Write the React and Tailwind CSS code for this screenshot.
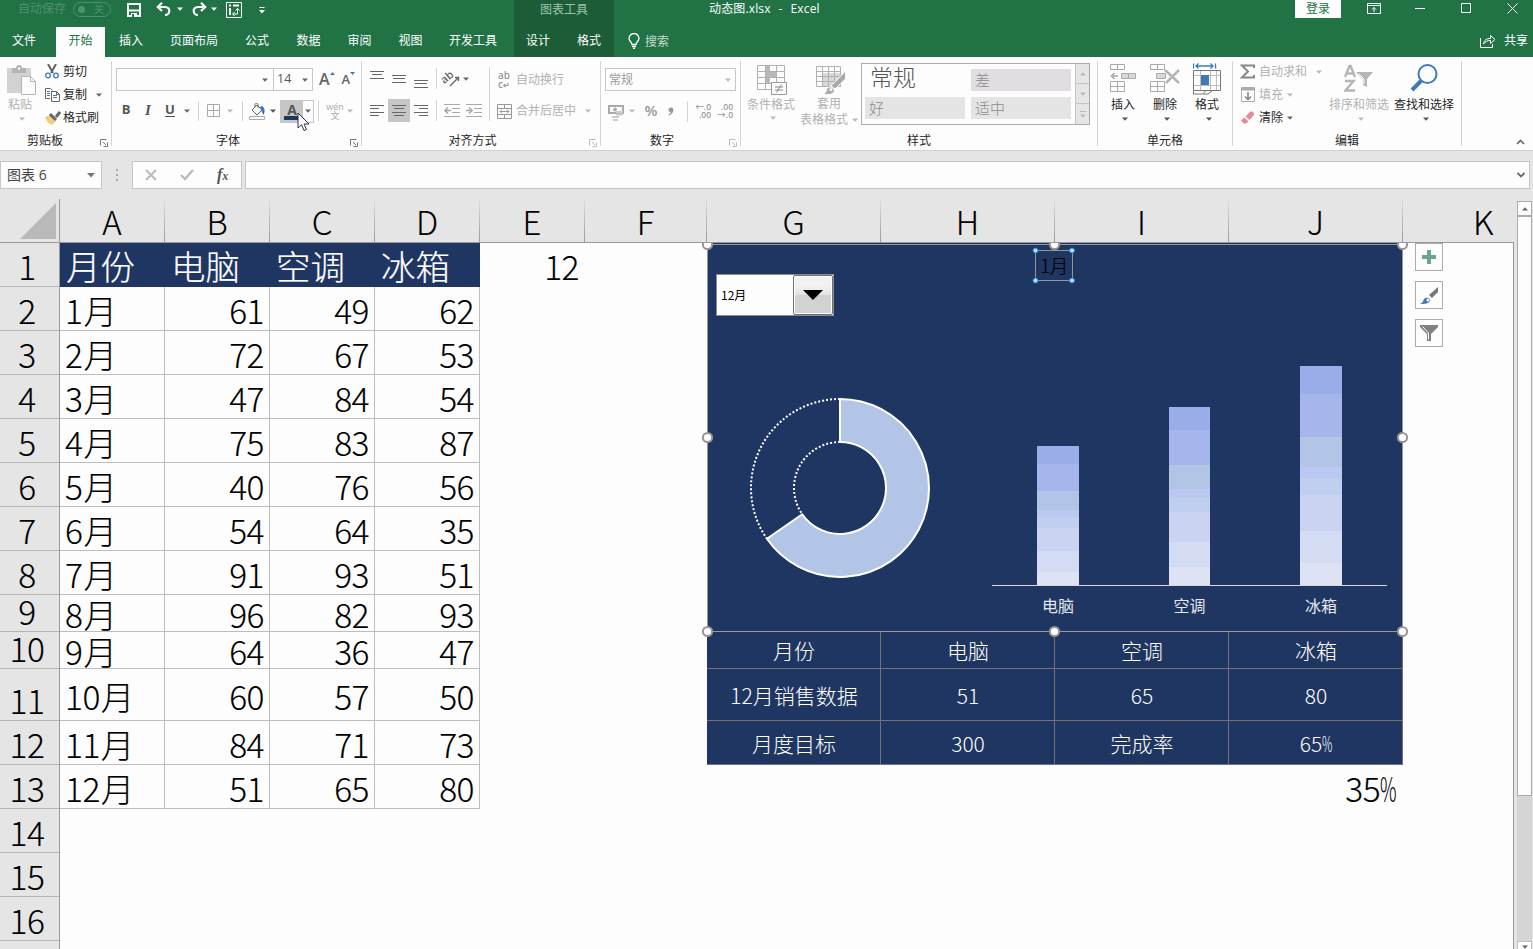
import React from 'react';

const columns = [
    {name: 'A', width: 105}, {name: 'B', width: 105}, {name: 'C', width: 105}, {name: 'D', width: 105},
    {name: 'E', width: 105}, {name: 'F', width: 122},
    {name: 'G', width: 174}, {name: 'H', width: 174}, {name: 'I', width: 174}, {name: 'J', width: 174},
];

const rowHeights = [44, 44, 44, 44, 44, 44, 44, 44, 37, 37, 52, 44, 44, 44, 44, 44];

const sales = [
    [61, 49, 62], [72, 67, 53], [47, 84, 54], [75, 83, 87], [40, 76, 56], [54, 64, 35],
    [91, 93, 51], [96, 82, 93], [64, 36, 47], [60, 57, 50], [84, 71, 73], [51, 65, 80],
];

const products = ['电脑', '空调', '冰箱'];

const summary = [
    {height: 37, cells: ['月份', ...products]},
    {height: 52, cells: ['12月销售数据', '51', '65', '80']},
    {height: 44, cells: ['月度目标', '300', '完成率', '65%']},
];

const barColors = ['#9aade9', '#a6b6ec', '#b3c5e7', '#bbc8f1', '#c0cef0', '#cad4f2', '#d4dcf4', '#dde3f4'];
const bars = [
    {x: 330, width: 42, stops: [446, 464, 491, 510, 517, 528, 551, 572, 585]},
    {x: 462, width: 41, stops: [407, 430, 465, 489, 498, 512, 542, 567, 585]},
    {x: 593, width: 42, stops: [366, 394, 437, 467, 478, 495, 531, 563, 585]},
];

function Caret({className = 'text-[#666]'}) {
    return (
        <svg className={`shrink-0 ${className}`} width="6" height="4" viewBox="0 0 6 4">
            <path d="M0 .5h6L3 3.7z" fill="currentColor"/>
        </svg>
    );
}

function Icon({w, h, className = '', children}) {
    return (
        <svg className={`shrink-0 ${className}`} width={w} height={h} viewBox={`0 0 ${w} ${h}`} fill="none"
             stroke="currentColor">
            {children}
        </svg>
    );
}

function Sep({className = ''}) {
    return <div className={`w-px shrink-0 bg-[#d5d5d5] ${className}`}/>;
}

function Group({label, className, labelClass = '', launcher, children}) {
    return (
        <div className={`flex h-[93px] shrink-0 ${className}`}>
            <div className="flex min-w-0 grow flex-col">
                <div className="flex h-[74px]">{children}</div>
                <div className="relative flex h-[19px] items-center justify-center">
                    <span className={labelClass}>{label}</span>
                    {launcher && (
                        <Icon w={8} h={8} className={`absolute right-[3px] top-2 ${launcher}`}>
                            <path d="M.5 6.5v-6h6M3 3l3 3M7.5 3.5v4h-4"/>
                        </Icon>
                    )}
                </div>
            </div>
            <Sep className="mt-1 h-[85px]"/>
        </div>
    );
}

function Lines({rows, className = ''}) {
    return (
        <Icon w={14} h={Math.round((rows.length - 1) * 10 / 3) + 1} className={className}>
            {rows.map(([from, to], i) => <path key={i} d={`M${from} ${Math.round(i * 10 / 3) + 0.5}H${to}`}/>)}
        </Icon>
    );
}

function TitleBar() {
    return (
        <div className="flex h-[27px] items-start text-white">
            <div className="flex h-[18px] w-[514px] items-center">
                <span className="ml-[18px] w-12 text-[#4f916c]">自动保存</span>
                <div className="ml-[7px] flex h-[15px] w-[38px] items-center justify-between rounded-full border border-[#4f916c] pl-1 pr-1.5 text-[10px] text-[#4f916c]">
                    <span className="size-[7px] rounded-full bg-[#4f916c]"/>关
                </div>
                <Icon w={14} h={14} className="ml-4 mt-0.5">
                    <path d="M1 1h12v12H1z" strokeWidth="2"/>
                    <path d="M1 7.5h12" strokeWidth="2"/>
                    <path d="M4 10h6v4H4z" fill="#fff" stroke="none"/>
                    <path d="M5 11h2v3H5z" fill="#217346" stroke="none"/>
                </Icon>
                <Icon w={15} h={14} className="ml-[15px]">
                    <path d="M1.500 5H9c6 0 5.500 8 0 8M6 .8 1.800 5 6 9" strokeWidth="2.200"/>
                </Icon>
                <Caret className="ml-1.5 text-white"/>
                <Icon w={15} h={14} className="ml-[9px]">
                    <path d="M13.500 5H6C0 5 .5 13 6 13M9 .8 13.200 5 9 9" strokeWidth="2.200"/>
                </Icon>
                <Caret className="ml-1 text-white"/>
                <Icon w={16} h={16} className="ml-[9px] mt-0.5">
                    <path d="M.5.5h15v15H.5z"/>
                    <path d="M3 2.500h2v2H3zM7 2.500h6v2H7zM3 6h2v7H3z" fill="currentColor" stroke="none"/>
                    <path d="M7 12h4.500V6.500M9.500 8.500l2-2 2 2M8.500 10l-2 2 2 2"/>
                </Icon>
                <Icon w={6} h={7} className="ml-[17px] mt-0.5">
                    <path d="M.5.5h5"/>
                    <path d="M0 3h6L3 6.500z" fill="currentColor" stroke="none"/>
                </Icon>
            </div>
            <div className="h-full w-[100px] bg-[#1c5d38] text-center leading-[19px] text-[#9dc3ad]">图表工具</div>
            <span className="ml-[95px] h-[18px] w-[586px] whitespace-pre leading-[18px] [word-spacing:0.7px] tracking-[0.15px]">动态图.xlsx  -  Excel</span>
            <div className="h-[18px] w-[46px] bg-[#fdfdfd] text-center leading-[18px] text-[#217346]">登录</div>
            <Icon w={14} h={11} className="ml-[26px] mt-[3px]">
                <path d="M.5.5h13v10H.5zM.5 2.500h13M7 9V4.500M5 6.500l2-2 2 2"/>
            </Icon>
            <Icon w={10} h={11} className="ml-[34px] mt-[3px]"><path d="M0 5.500h10"/></Icon>
            <Icon w={10} h={10} className="ml-9 mt-[3px]"><path d="M.5.5h9v9h-9z"/></Icon>
            <Icon w={11} h={11} className="ml-9 mt-[3px]"><path d="m.5.5 10 10M10.500.5l-10 10"/></Icon>
        </div>
    );
}

function Tabs() {
    const tab = 'shrink-0 text-center leading-[28px]';
    return (
        <div className="flex h-[30px] text-white">
            <div className={`${tab} mr-2 w-12`}>文件</div>
            <div className={`${tab} w-[49px] bg-[#fdfdfd] text-[#217346]`}>开始</div>
            <div className={`${tab} w-[52px]`}>插入</div>
            <div className={`${tab} w-[74px]`}>页面布局</div>
            <div className={`${tab} w-[52px]`}>公式</div>
            <div className={`${tab} w-[51px]`}>数据</div>
            <div className={`${tab} w-[51px]`}>审阅</div>
            <div className={`${tab} w-[51px]`}>视图</div>
            <div className={`${tab} mr-1 w-[74px]`}>开发工具</div>
            <div className="flex w-[100px] bg-[#1c5d38]">
                <div className={`${tab} w-12`}>设计</div>
                <div className={`${tab} w-[54px]`}>格式</div>
            </div>
            <Icon w={12} h={16} className="ml-[14px] mt-1.5">
                <path d="M4 11.500C4 9 1 8.500 1 5.500a5 5 0 0 1 10 0c0 3-3 3.500-3 6zM4 13.500h4M5 15.500h2" strokeWidth="1.300"/>
            </Icon>
            <div className={`${tab} ml-[5px] w-6 pt-px text-[#c5dccf]`}>搜索</div>
            <Icon w={16} h={14} className="ml-auto mt-[7px]">
                <path d="M.5 4v9.500h12V10M3.500 10c.5-4 3-5.500 7-5.500V1.500l4.500 4-4.500 4v-3c-3 0-5 .8-7 3.500z"/>
            </Icon>
            <div className={`${tab} ml-2 mr-[5px] w-6`}>共享</div>
        </div>
    );
}

function ClipboardGroup() {
    return (
        <Group label="剪贴板" className="w-[112px]" labelClass="mr-[21px]" launcher="text-[#777]">
            <div className="flex w-[43px] flex-col items-center text-[#b1b1b1]">
                <Icon w={29} h={31} className="mt-2">
                    <path d="M0 3h24v25H0z" fill="#d2d2d2" stroke="none"/>
                    <path d="M5 8V3h4c0-4 6-4 6 0h4v5z" fill="#b5b5b5" stroke="none"/>
                    <path d="M11 3.500h2" stroke="#fff" strokeWidth="2"/>
                    <path d="M14.500 11.500h9l5 5v13h-14zM23.500 11.500v5h5" fill="#fdfdfd" stroke="#b5b5b5"/>
                </Icon>
                <span className="mr-[3px] leading-[18px]">粘贴</span>
                <Caret className="mt-[3px] text-[#bbb]"/>
            </div>
            <div className="ml-[2px] flex flex-col pt-[3px] text-[#262626]">
                <div className="flex h-[23px] items-center">
                    <Icon w={14} h={15} className="mr-1">
                        <path d="M3 0l5 9M11 0 6 9" stroke="#666" strokeWidth="2"/>
                        <circle cx="3" cy="11.500" r="2.300" stroke="#3f7ab5" strokeWidth="1.300"/>
                        <circle cx="11" cy="11.500" r="2.300" stroke="#3f7ab5" strokeWidth="1.300"/>
                    </Icon>
                    剪切
                </div>
                <div className="flex h-[23px] items-center">
                    <Icon w={15} h={14} className="mr-[3px] text-[#666]">
                        <path d="M5 10.500H.5V.5h5l2 2"/>
                        <path d="M2 3.500h3M2 5.500h3M2 7.500h3M8 7.500h4M8 9.500h4" stroke="#3f7ab5"/>
                        <path d="M6.500 3.500h5l3 3v7h-8zM11.500 3.500v3h3"/>
                    </Icon>
                    复制
                    <Caret className="ml-[9px] text-[#666]"/>
                </div>
                <div className="flex h-[23px] items-center">
                    <Icon w={16} h={14} className="mr-0.5">
                        <path d="M0 6l5-2 6 6-4 4c-2-1-5-2-7-8z" fill="#f5cd82" stroke="none"/>
                        <path d="M5 3l6 6M11 6l4-5" stroke="#666" strokeWidth="3"/>
                    </Icon>
                    格式刷
                </div>
            </div>
        </Group>
    );
}

function FontGroup() {
    return (
        <Group label="字体" className="w-[250px]" labelClass="mr-[17px]" launcher="text-[#777]">
            <div className="flex flex-col">
                <div className="ml-1 mt-[11px] flex h-[23px]">
                    <div className="flex w-[158px] items-center justify-end border border-[#c6c6c6] pr-[5px]"><Caret/></div>
                    <div className="-ml-px flex w-10 items-center justify-between border border-[#c6c6c6] pl-[3px] pr-1 text-[12.5px] text-[#555]">
                        14<Caret/>
                    </div>
                    <span className="ml-1.5 pt-[3px] text-[16px] font-semibold text-[#666]">A</span>
                    <Icon w={5} h={3} className="mt-1"><path d="M0 3h5L2.500 0z" fill="#3f7ab5" stroke="none"/></Icon>
                    <span className="ml-[7px] pt-[5px] text-[13px] font-semibold text-[#666]">A</span>
                    <Icon w={5} h={3} className="mt-1"><path d="M0 0h5L2.500 3z" fill="#3f7ab5" stroke="none"/></Icon>
                </div>
                <div className="mt-2 flex h-6 items-center text-[#555]">
                    <span className="-mt-1 w-7 text-center text-[13px] font-bold">B</span>
                    <span className="-mt-0.5 w-4 text-center font-['Liberation_Serif'] text-[15px] font-bold italic">I</span>
                    <span className="-mt-1 w-7 text-center text-[13px] font-bold underline underline-offset-2">U</span>
                    <Caret/>
                    <Sep className="ml-2 h-5"/>
                    <Icon w={14} h={14} className="ml-2 text-[#aaa]"><path d="M.5.5h12v12H.5zM6.500.5v12M.5 6.500h12"/></Icon>
                    <Caret className="ml-1.5 text-[#bbb]"/>
                    <Sep className="ml-[9px] h-5"/>
                    <Icon w={17} h={17} className="ml-1.5">
                        <path d="M3 7l5-5 5 5-5 5zM6 4V1.500C6 0 9 0 9 1.500V5" stroke="#666"/>
                        <path d="M12 3c3 0 5 4 2.500 9C13 10 13 8 11 5z" fill="#3f7ab5" stroke="none"/>
                        <path d="M.5 13.500h15v3H.5z" stroke="#aaa"/>
                    </Icon>
                    <Caret className="ml-1"/>
                    <div className="relative ml-1 flex h-[23px] w-[34px] border border-[#c6c6c6]">
                        <div className="flex w-[22px] flex-col items-center bg-[#c6c6c6] pt-[3px]">
                            <span className="text-[14px] font-bold leading-[12px]">A</span>
                            <span className="h-1 w-4 bg-[#203662]"/>
                        </div>
                        <div className="flex grow items-center justify-center"><Caret/></div>
                        <svg className="absolute left-4 top-[11px] z-20" width="14" height="20" viewBox="0 0 14 20">
                            <path d="M1 1v15l3.500-3.300L7 18.500l2.500-1-2.500-5.500h5z" fill="#fff" stroke="#2a3550"/>
                        </svg>
                    </div>
                    <Sep className="ml-1 h-5"/>
                    <div className="ml-[7px] flex w-[18px] flex-col items-center text-[#aaa]">
                        <span className="text-[9px] leading-[9px]">wén</span>
                        <span className="text-[9px] leading-[9px]">文</span>
                    </div>
                    <Caret className="ml-[3px] text-[#bbb]"/>
                </div>
            </div>
        </Group>
    );
}

function AlignGroup() {
    const full = [[0, 14], [1, 13], [0, 14]];
    return (
        <Group label="对齐方式" className="w-[239px]" labelClass="mr-[17px]" launcher="text-[#bbb]">
            <div className="flex w-[127px] flex-col pl-2 text-[#666]">
                <div className="mt-[11px] flex h-6">
                    <Lines rows={[[0, 14], [2, 12], [0, 14]]} className="mt-[3px]"/>
                    <Lines rows={full} className="ml-2 mt-[7px]"/>
                    <Lines rows={full} className="ml-2 mt-3"/>
                    <Sep className="ml-2 h-[21px]"/>
                    <Icon w={17} h={16} className="ml-[7px] mt-[3px] overflow-visible">
                        <text x="-2" y="9" fontSize="11" fontWeight="600" fill="currentColor" stroke="none"
                              transform="rotate(-40 5 8)">ab
                        </text>
                        <path d="M6 15 14.500 6.500M11 6.500h3.500V10" strokeWidth="1.400"/>
                    </Icon>
                    <Caret className="ml-[2px] mt-[9px]"/>
                </div>
                <div className="mt-[7px] flex h-[23px] items-center">
                    <Lines rows={[[0, 14], [0, 9], [0, 14], [0, 9]]}/>
                    <div className="ml-1 flex h-[23px] w-[22px] items-center justify-center bg-[#c6c6c6]">
                        <Lines rows={[[0, 14], [2, 12], [0, 14], [2, 12]]}/>
                    </div>
                    <Lines rows={[[0, 14], [5, 14], [0, 14], [5, 14]]} className="ml-1"/>
                    <Sep className="ml-2 h-[21px]"/>
                    <Icon w={16} h={13} className="ml-[7px] text-[#aaa]">
                        <path d="M0 .5h16M8 4.500h8M8 8.500h8M0 12.500h16"/>
                        <path d="M1 6.500h6M4 3.500l-3 3 3 3" strokeWidth="1.600"/>
                    </Icon>
                    <Icon w={16} h={13} className="ml-1.5 text-[#aaa]">
                        <path d="M0 .5h16M8 4.500h8M8 8.500h8M0 12.500h16"/>
                        <path d="M0 6.500h6M3 3.500l3 3-3 3" strokeWidth="1.600"/>
                    </Icon>
                </div>
            </div>
            <Sep className="mt-[10px] h-[54px]"/>
            <div className="flex flex-col text-[#b1b1b1]">
                <div className="ml-2 mt-[11px] flex h-[23px] items-center">
                    <div className="mr-[5px] flex w-[13px] flex-col text-[10px] font-semibold leading-[9px] text-[#999]">
                        <span>ab</span>
                        <span>c<span className="text-[8px]">↵</span></span>
                    </div>
                    自动换行
                </div>
                <div className="ml-[7px] mt-2 flex h-6 items-center">
                    <Icon w={15} h={15} className="mr-1 text-[#999]">
                        <path d="M.5.5h14v14H.5zM.5 4.500h14M.5 10.500h14M7.500.5v4M7.500 10.500v4M3 7.500h9M5 5.500l-2 2 2 2M10 5.500l2 2-2 2"/>
                    </Icon>
                    合并后居中
                    <Caret className="ml-[9px] text-[#bbb]"/>
                </div>
            </div>
        </Group>
    );
}

function NumberGroup() {
    return (
        <Group label="数字" className="w-[140px]" labelClass="mr-[17px]" launcher="text-[#bbb]">
            <div className="flex flex-col text-[#999]">
                <div className="ml-1 mt-[11px] flex h-[23px] w-[131px] items-center justify-between border border-[#c6c6c6] pl-[3px] pr-1">
                    常规<Caret className="text-[#bbb]"/>
                </div>
                <div className="ml-[7px] mt-2 flex h-6 items-center">
                    <Icon w={16} h={16} className="mt-1 text-[#aaa]">
                        <path d="M1 1h14v7H1z" strokeWidth="2"/>
                        <circle cx="7" cy="4.500" r="1.500" fill="currentColor"/>
                        <path d="M8 7h7M8 9.500h7M4 12h7M5 15h5" stroke="#ccc" strokeWidth="2"/>
                    </Icon>
                    <Caret className="ml-[5px] text-[#bbb]"/>
                    <span className="-mt-0.5 ml-2 w-4 text-center text-[15px] font-semibold">%</span>
                    <svg className="ml-[9px]" width="6" height="9" viewBox="0 0 6 9">
                        <path d="M3 .5c4 0 3 6-2 8l-.5-1C2 7 2.500 6 2.500 5-.5 5 0 .5 3 .5z" fill="#999"/>
                    </svg>
                    <Sep className="ml-[13px] h-[21px]"/>
                    <div className="ml-2 flex w-[15px] flex-col items-end text-[8.5px] font-semibold leading-[8px]">
                        <span>←.0</span>
                        <span>.00</span>
                    </div>
                    <div className="ml-[7px] flex w-[15px] flex-col items-end text-[8.5px] font-semibold leading-[8px]">
                        <span>.00</span>
                        <span>→.0</span>
                    </div>
                </div>
            </div>
        </Group>
    );
}

function StylesGroup() {
    const style = 'flex h-[22px] w-[100px] items-center pl-1 text-[15px] font-light';
    return (
        <Group label="样式" className="w-[357px]">
            <div className="flex w-[60px] flex-col items-center text-[#b1b1b1]">
                <Icon w={30} h={30} className="ml-0.5 mt-2">
                    <path d="M9 1h4v5h4v6h-4v6H9z" fill="#b8b8b8" stroke="none"/>
                    <path d="M9 7h10v5H9z" fill="#b8b8b8" stroke="none"/>
                    <path d="M.5.5h27v24H.5zM.5 6.500h27M.5 12.500h27M.5 18.500h27M8.500.5v24M19.500.5v24"/>
                    <path d="M14.500 17.500h15v12h-15z" fill="#fdfdfd" stroke="#999"/>
                    <path d="M18 22h8M18 25h8M24.500 19.500l-5 8" stroke="#888"/>
                </Icon>
                <span className="leading-[19px]">条件格式</span>
                <Caret className="ml-1 mt-[2px] text-[#bbb]"/>
            </div>
            <div className="flex w-[60px] flex-col text-[#b1b1b1]">
                <Icon w={30} h={29} className="ml-[15px] mt-[9px]">
                    <path d="M7 7h18v14H7z" fill="#d8d8d8" stroke="none"/>
                    <path d="M.5.5h24v20H.5zM.5 5.500h24M.5 10.500h24M.5 15.500h24M6.500.5v20M12.500.5v20M18.500.5v20"/>
                    <path d="M29.500 5v8L19 23l-4-3z" fill="#aaa" stroke="#fdfdfd"/>
                    <path d="M6 28c4 0 4-3 5-6 3-3 9 1 7 4-2 3-7 3-12 2z" fill="#aaa" stroke="#fdfdfd"/>
                    <circle cx="15" cy="23.500" r="1.500" fill="#fdfdfd" stroke="none"/>
                </Icon>
                <span className="ml-4 leading-[18px]">套用</span>
                <span className="-ml-px flex items-center leading-[13px]">
                    表格格式<Caret className="ml-1 text-[#bbb]"/>
                </span>
            </div>
            <div className="mt-1.5 flex h-[62px] w-[229px] border border-[#ababab]">
                <div className="grid grow grid-cols-[100px_100px] content-start gap-1.5 pl-[3px] pt-[5px] text-[#8c8c8c]">
                    <div className="flex h-[22px] items-center whitespace-nowrap pl-[5px] text-[23px] font-light text-[#555]">
                        <span className="-mt-1.5">常规</span>
                    </div>
                    <div className={`${style} bg-[#e2dde2]`}>差</div>
                    <div className={`${style} bg-[#e4e4e4]`}>好</div>
                    <div className={`${style} bg-[#e4e4e4]`}>适中</div>
                </div>
                <div className="flex w-[14px] flex-col divide-y divide-[#c6c6c6] border-l border-[#c6c6c6] bg-[#e5e5e5]">
                    <div className="flex h-5 items-center justify-center"><Caret className="rotate-180 text-[#bbb]"/></div>
                    <div className="flex h-5 items-center justify-center"><Caret className="text-[#bbb]"/></div>
                    <div className="flex grow flex-col items-center justify-center gap-0.5">
                        <span className="h-px w-1.5 bg-[#bbb]"/><Caret className="text-[#bbb]"/>
                    </div>
                </div>
            </div>
        </Group>
    );
}

function BigButton({label, className, icon, muted}) {
    return (
        <div className={`flex shrink-0 flex-col items-center ${muted ? 'text-[#b1b1b1]' : 'text-[#262626]'} ${className}`}>
            <div className="flex h-[38px] items-end">{icon}</div>
            <span className="whitespace-nowrap leading-[19px]">{label}</span>
            <Caret className={muted ? 'ml-1 mt-[3px] text-[#bbb]' : 'ml-1 mt-[3px] text-[#555]'}/>
        </div>
    );
}

function CellsGroup() {
    return (
        <Group label="单元格" className="w-[135px]">
            <BigButton label="插入" className="w-[50px]" icon={
                <Icon w={26} h={31} className="text-[#aaa]">
                    <path d="M.5.5h14v5H.5zM7.500.5v5M.5 17.500h14v10H.5zM.5 22.500h14M7.500 17.500v10"/>
                    <path d="M11.500 9.500h14v5h-14zM18.500 9.500v5" fill="#d8d8d8"/>
                    <path d="M8 12H2M4.500 9l-3 3 3 3" strokeWidth="1.600"/>
                </Icon>
            }/>
            <BigButton label="删除" className="w-[34px]" icon={
                <Icon w={30} h={31} className="text-[#aaa]">
                    <path d="M.5.5h14v5H.5zM7.500.5v5M.5 17.500h14v10H.5zM.5 22.500h14M7.500 17.500v10"/>
                    <path d="M6.500 9.500h9v5h-9z" fill="#d8d8d8"/>
                    <path d="M15 6l14 13M29 6 16 19" strokeWidth="2.500" stroke="#b5b5b5"/>
                </Icon>
            }/>
            <BigButton label="格式" className="w-[50px]" icon={
                <Icon w={28} h={32} className="text-[#777]">
                    <path d="M.5.500v5M22.500.5v5M3 3h17M5.500.5 3 3l2.500 2.500M17.500.5 20 3l-2.500 2.500" stroke="#3f7ab5"
                          strokeWidth="1.300"/>
                    <path d="M.5 12.500h27M.5 22.500h27M7.500 7.500v20M17.500 7.500v20M23.500 7.500v20" stroke="#bbb"/>
                    <path d="M.5 7.500h27v20H.5z"/>
                    <path d="M8 12h8v10H8z" fill="#3f7ab5" stroke="none"/>
                    <path d="M.5 28v3h9l3-3M10 31h5l4-3"/>
                </Icon>
            }/>
        </Group>
    );
}

function EditGroup() {
    return (
        <Group label="编辑" className="w-[229px]">
            <div className="flex w-[96px] shrink-0 flex-col pl-[7px] pt-[3px] text-[#b1b1b1]">
                <div className="flex h-[23px] items-center">
                    <Icon w={15} h={15} className="mr-1 text-[#888]">
                        <path d="M14 4V1.500H2L8 7.500l-6 6h12V11" strokeWidth="2"/>
                    </Icon>
                    自动求和
                    <Caret className="ml-[9px] text-[#bbb]"/>
                </div>
                <div className="flex h-[23px] items-center">
                    <Icon w={14} h={15} className="ml-px mr-1 text-[#aaa]">
                        <path d="M.5.5h13v14H.5z"/>
                        <path d="M0 2h14" strokeWidth="3"/>
                        <path d="M7 5v7M4 9.500l3 3 3-3" strokeWidth="1.600" stroke="#888"/>
                    </Icon>
                    填充
                    <Caret className="ml-1 text-[#bbb]"/>
                </div>
                <div className="flex h-[23px] items-center text-[#262626]">
                    <Icon w={14} h={14} className="ml-px mr-1">
                        <path d="M4.500 5.500 9.500.5h2L13 2.500v1.500L8.500 9zM0 9.500l3.500-3 4 4L5 12.500H2.500z" fill="#e88a9a" stroke="none"/>
                    </Icon>
                    清除
                    <Caret className="ml-1 text-[#666]"/>
                </div>
            </div>
            <BigButton label="排序和筛选" className="w-[60px]" muted icon={
                <Icon w={30} h={31} className="text-[#b5b5b5]">
                    <path d="M1 13 5.500 2h1L11 13M2.500 9.500h7M1 17h8.500L1.500 26.500H11" strokeWidth="2.400"/>
                    <path d="M12 8h17l-6 7v8l-4-2v-6z" fill="currentColor" stroke="none"/>
                    <path d="M15 10l5 5v5" stroke="#fdfdfd"/>
                </Icon>
            }/>
            <BigButton label="查找和选择" className="ml-[5px] w-[60px]" icon={
                <Icon w={28} h={31}>
                    <circle cx="17.500" cy="10" r="9" stroke="#3f7ab5" strokeWidth="2"/>
                    <path d="M11 17 2 26" stroke="#3f7ab5" strokeWidth="4"/>
                </Icon>
            }/>
        </Group>
    );
}

function FormulaBar() {
    const box = 'flex h-7 items-center border border-[#c6c6c6] bg-[#fdfdfd]';
    return (
        <div className="flex h-12 items-start bg-[#e5e5e5] pt-[10px]">
            <div className={`${box} w-[102px] justify-between pl-1.5 pr-1.5 text-[14px] text-[#444]`}>
                图表 6
                <svg width="8" height="5" viewBox="0 0 8 5"><path d="M0 0h8L4 4.500z" fill="#777"/></svg>
            </div>
            <div className="ml-[14px] mt-2 flex h-3 w-0.5 flex-col justify-between">
                <span className="size-0.5 bg-[#aaa]"/><span className="size-0.5 bg-[#aaa]"/><span
                className="size-0.5 bg-[#aaa]"/>
            </div>
            <div className={`${box} ml-[14px] w-[110px] text-[#bbb]`}>
                <Icon w={12} h={12} className="ml-3"><path d="m1 1 10 10M11 1 1 11" strokeWidth="2"/></Icon>
                <Icon w={14} h={12} className="ml-[23px]"><path d="m1 6 4 4 8-9" strokeWidth="2.400"/></Icon>
                <span className="ml-[23px] font-['Liberation_Serif'] text-[16px] font-bold italic text-[#555]">
                    f<span className="text-[12px]">x</span>
                </span>
            </div>
            <div className={`${box} ml-[3px] w-[1285px] justify-end pr-1`}>
                <Icon w={8} h={6}><path d="m.5 1 3.500 3.500L7.500 1" stroke="#666" strokeWidth="1.800"/></Icon>
            </div>
        </div>
    );
}

// Month share of the yearly target as a ring, with one stacked bar per product beside it
function Chart() {
    const angle = (196 / 300) * 2 * Math.PI;
    const at = r => `${133 + r * Math.sin(angle)} ${245 - r * Math.cos(angle)}`;
    return (
        <div className="relative z-10 h-[389px] w-[696px] bg-[#203662]">
            <svg className="absolute left-0 top-0 overflow-visible" width="696" height="389" viewBox="0 0 696 389">
                <path d="M.5 388.500V1.500h695v387z" fill="none" stroke="#999"/>
                <path d={`M133 156A89 89 0 0 0 ${at(89)}M133 199A46 46 0 0 0 ${at(46)}`} fill="none" stroke="#fff"
                      strokeWidth="2" strokeDasharray="2 2"/>
                <path d={`M133 156A89 89 0 1 1 ${at(89)}L${at(46)}A46 46 0 1 0 133 199z`} fill="#b3c5e7" stroke="#fff"
                      strokeWidth="2" strokeLinejoin="round"/>
                {bars.map(bar => bar.stops.slice(0, -1).map((y, i) => (
                    <rect key={`${bar.x}-${i}`} x={bar.x} y={y - 243} width={bar.width} height={bar.stops[i + 1] - y}
                          fill={barColors[i]}/>
                )))}
                <path d="M285 342.500h395" stroke="#d9d9d9"/>
                {products.map((name, i) => (
                    <text key={name} x={351 + i * 131.500} y="368.500" textAnchor="middle" fontSize="16" fill="#e3e7ef">
                        {name}
                    </text>
                ))}
                {[[0.5, 1.5], [347.5, 1.5], [695.5, 1.5], [0.5, 194.5], [695.5, 194.5], [0.5, 388.5], [347.5, 388.5], [695.5, 388.5]].map(([x, y]) => (
                    <circle key={`${x}-${y}`} cx={x} cy={y} r="4.600" fill="#fff" stroke="#969696" strokeWidth="2"/>
                ))}
            </svg>
            <div className="absolute left-[9px] top-[31px] flex h-[42px] w-[118px] items-center border border-[#8c8c8c] bg-[#fdfdfd] pl-1 text-[12px] text-black">
                12月
                <div className="ml-auto flex h-full w-10 items-center justify-center rounded-[2px] border border-[#707070] bg-linear-to-b from-[#f2f2f2] from-25% via-[#e2e2e2] via-50% to-[#d2d2d2] to-50% shadow-[inset_0_0_0_1px_#fff]">
                    <svg width="20" height="10" viewBox="0 0 20 10"><path d="M0 0h20L10 10z"/></svg>
                </div>
            </div>
            <div className="absolute left-[328px] top-[7px] flex h-[31px] w-[38px] items-center justify-center border border-[#969696] text-[18.5px] font-light tracking-[-0.5px] text-black [-webkit-text-stroke:0.2px]">
                1月
                <svg className="absolute -left-px -top-px overflow-visible" width="38" height="31" viewBox="0 0 38 31">
                    {[[0.5, 0.5], [37, 0.5], [0.5, 30.5], [37, 30.5]].map(([x, y]) => (
                        <circle key={`${x}-${y}`} cx={x} cy={y} r="2.500" fill="#b9dcf7" stroke="#1583d8"/>
                    ))}
                </svg>
            </div>
        </div>
    );
}

function Value({text}) {
    if (!text.endsWith('%')) return text;
    return (
        <span className="inline-flex">
            {text.slice(0, -1)}
            <span className="-mr-[0.41em] inline-block origin-left scale-x-[0.55]">%</span>
        </span>
    );
}

function Sheet() {
    const number = 'font-light text-[33.5px] tracking-[-0.5px] leading-none [-webkit-text-stroke:0.12px]';
    const letter = 'text-[33px] font-light leading-none [-webkit-text-stroke:0.12px]';
    return (
        <div className="flex h-[750px] bg-[#e5e5e5] font-['Noto_Sans_CJK_SC',sans-serif] text-black">
            <div className="flex w-[1514px] flex-col">
                <div className="flex h-[44px] border-b border-[#999]">
                    <div className="flex w-[60px] items-end justify-end border-r border-[#999] pb-[3px] pr-[3px]">
                        <svg width="36" height="36" viewBox="0 0 36 36"><path d="M36 0v36H0z" fill="#b9b9b9"/></svg>
                    </div>
                    {columns.map(col => (
                        <div key={col.name} style={{width: col.width}} className="flex">
                            <div className={`${letter} flex grow items-center justify-center pt-[2px]`}>{col.name}</div>
                            <div className="w-px bg-linear-to-b from-[#e0e0e0] to-[#999]"/>
                        </div>
                    ))}
                    <div className={`${letter} flex grow items-center pl-[70px] pt-[2px]`}>K</div>
                </div>

                <div className="flex h-[706px] overflow-hidden bg-[#fdfdfd]">
                    <div className="flex w-[60px] shrink-0 flex-col border-r border-[#999] bg-[#e5e5e5]">
                        {rowHeights.map((height, i) => (
                            <div key={i} style={{height}}
                                 className={`${number} flex shrink-0 items-end justify-center border-b border-[#b5b5b5] pb-1 pr-[5px]`}>
                                {i + 1}
                            </div>
                        ))}
                    </div>

                    <div className="w-[420px] shrink-0">
                        <div className="flex h-[44px] border-b border-[#203662] bg-[#203662] text-white">
                            {['月份', ...products].map(name => (
                                <div key={name} className="flex w-[105px] items-center pl-1.5 pt-[2px] text-[34.5px] font-light leading-none [-webkit-text-stroke:0.2px]">
                                    {name}
                                </div>
                            ))}
                        </div>
                        {sales.map((values, i) => (
                            <div key={i} style={{height: rowHeights[i + 1]}} className="flex border-b border-[#bdbdbd]">
                                <div className={`${number} flex w-[105px] items-center border-r border-[#bdbdbd] pl-[5px] pt-[2px]`}>
                                    {i + 1}<span className="ml-px">月</span>
                                </div>
                                {values.map((value, j) => (
                                    <div key={j} className={`${number} flex w-[105px] items-center justify-end border-r border-[#bdbdbd] pr-[5px] pt-[2px]`}>
                                        {value}
                                    </div>
                                ))}
                            </div>
                        ))}
                    </div>

                    <div className={`${number} flex h-[44px] w-[105px] shrink-0 items-center justify-end pr-[6px] pt-px`}>12</div>

                    <div className="ml-[122px] w-[696px] shrink-0">
                        <Chart/>
                        {summary.map(row => (
                            <div key={row.cells[0]} style={{height: row.height}}
                                 className="flex border-b border-[#737373] bg-[#203662] text-[21px] font-light leading-none text-white">
                                {row.cells.map(text => (
                                    <div key={text} className="flex w-[174px] items-center justify-center border-r border-[#737373] pl-px pt-px">
                                        <Value text={text}/>
                                    </div>
                                ))}
                            </div>
                        ))}
                        <div className={`${number} flex h-[44px] items-center justify-end pr-[7px] pt-px`}>
                            <Value text="35%"/>
                        </div>
                    </div>

                    <div className="flex grow flex-col gap-[10px] border-r border-[#999] pl-3">
                        <div className="flex size-7 items-center justify-center border border-[#ababab] bg-[#fdfdfd]">
                            <Icon w={14} h={14}><path d="M7 0v14M0 7h14" stroke="#6aa592" strokeWidth="4"/></Icon>
                        </div>
                        <div className="flex size-7 items-center justify-center border border-[#ababab] bg-[#fdfdfd]">
                            <Icon w={18} h={17}>
                                <path d="M18 0v5l-6 6-3-3z" fill="#777" stroke="none"/>
                                <path d="M0 17c3-1 3-3 4-5 3-3 7 0 6 2-2 3-6 3-10 3z" fill="#3f7ab5" stroke="none"/>
                                <circle cx="8" cy="13" r="1.500" fill="#fff" stroke="none"/>
                            </Icon>
                        </div>
                        <div className="flex size-7 items-center justify-center border border-[#ababab] bg-[#fdfdfd]">
                            <Icon w={18} h={16}>
                                <path d="M0 0h18v2l-7 7v7H7V9L0 2z" fill="#808080" stroke="none"/>
                                <path d="m2.500 1.500 6 6.500v6.500" stroke="#fdfdfd"/>
                            </Icon>
                        </div>
                    </div>
                </div>
            </div>

            <div className="ml-[3px] flex w-[15px] flex-col pt-[2px]">
                <div className="flex h-[15px] items-center justify-center border border-[#ababab] bg-[#fdfdfd]">
                    <Caret className="rotate-180 text-[#666]"/>
                </div>
                <div className="h-[580px] border border-[#ababab] bg-[#fdfdfd]"/>
                <div className="h-[145px] bg-[#d5d5d5]"/>
                <div className="flex grow items-end justify-center border border-b-0 border-[#c0c0c0] bg-[#fdfdfd]">
                    <Caret/>
                </div>
            </div>
        </div>
    );
}

function App() {
    return (
        <div className="h-[949px] w-[1533px] overflow-hidden bg-[#e5e5e5] font-['Open_Sans','Noto_Sans_CJK_SC',sans-serif] text-[12px] leading-none">
            <div className="bg-[#217346]">
                <TitleBar/>
                <Tabs/>
            </div>
            <div className="flex h-[94px] border-b border-[#d0d0d0] bg-[#fdfdfd] text-[#262626]">
                <ClipboardGroup/>
                <FontGroup/>
                <AlignGroup/>
                <NumberGroup/>
                <StylesGroup/>
                <CellsGroup/>
                <EditGroup/>
                <Icon w={9} h={6} className="ml-auto mr-2 mt-[82px]">
                    <path d="m1 5 3.500-3.500L8 5" stroke="#666" strokeWidth="1.600"/>
                </Icon>
            </div>
            <FormulaBar/>
            <Sheet/>
        </div>
    );
}

export default App;
